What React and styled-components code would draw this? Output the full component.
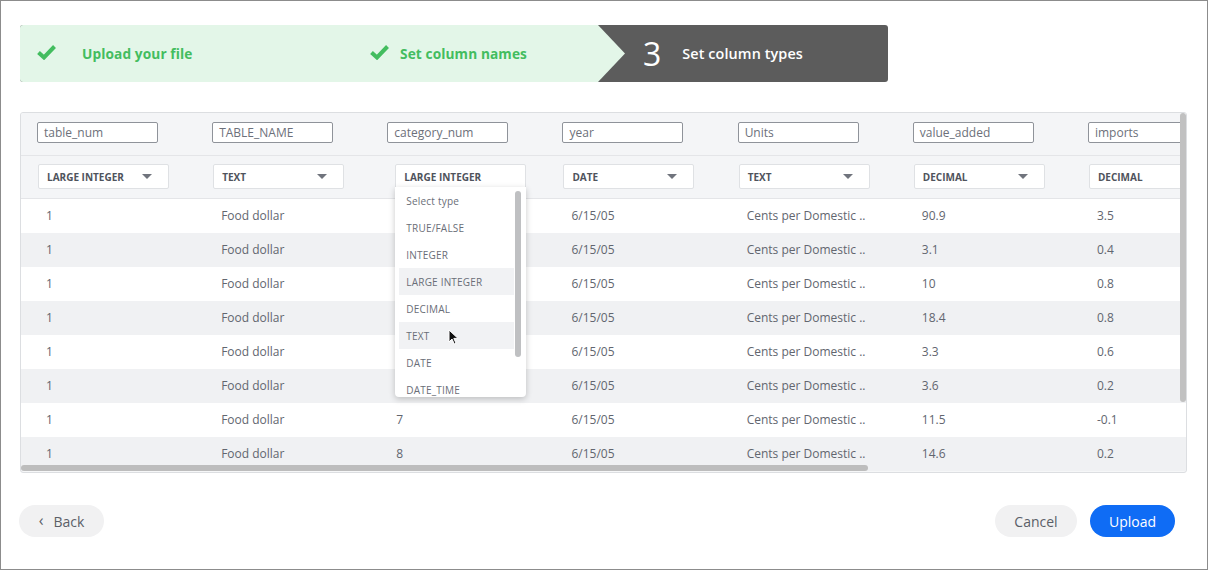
import React from 'react';
import styled, { createGlobalStyle } from 'styled-components';

const GlobalStyle = createGlobalStyle`
  html, body {
    margin: 0;
    padding: 0;
    background: #fff;
  }
  * {
    box-sizing: border-box;
  }
`;

const COL_W = 175.17;

const columns = [
  { name: 'table_num', type: 'LARGE INTEGER' },
  { name: 'TABLE_NAME', type: 'TEXT' },
  { name: 'category_num', type: 'LARGE INTEGER', open: true },
  { name: 'year', type: 'DATE' },
  { name: 'Units', type: 'TEXT' },
  { name: 'value_added', type: 'DECIMAL' },
  { name: 'imports', type: 'DECIMAL' },
];

const values = [
  ['90.9', '3.5'],
  ['3.1', '0.4'],
  ['10', '0.8'],
  ['18.4', '0.8'],
  ['3.3', '0.6'],
  ['3.6', '0.2'],
  ['11.5', '-0.1'],
  ['14.6', '0.2'],
];

const rows = values.map((v, i) => [
  '1',
  'Food dollar',
  String(i + 1),
  '6/15/05',
  'Cents per Domestic ..',
  v[0],
  v[1],
]);

const typeOptions = [
  'Select type',
  'TRUE/FALSE',
  'INTEGER',
  'LARGE INTEGER',
  'DECIMAL',
  'TEXT',
  'DATE',
  'DATE_TIME',
];

const Check = () => (
  <svg width="21" height="16" viewBox="0 0 21 16">
    <path d="M2.5 8.5 L8 13.5 L18.5 2.5" fill="none" stroke="#43bd5f" strokeWidth="4" strokeLinejoin="miter" />
  </svg>
);

const Caret = () => (
  <svg width="10" height="5" viewBox="0 0 10 5">
    <path d="M0 0 L10 0 L5 5 Z" fill="#70747d" />
  </svg>
);

const Cursor = () => (
  <svg width="11" height="16" viewBox="0 0 11 16">
    <path d="M1 1 L1 13 L4 10 L6.3 15 L8 14.2 L5.8 9.4 L10 9.4 Z" fill="#111" stroke="#fff" strokeWidth="1" />
  </svg>
);

const App = () => {
  return (
    <>
      <GlobalStyle />
      <Frame>
        <Stepper>
          <DoneSteps>
            <Step width={333} gap={25}>
              <Check />
              <StepText>Upload your file</StepText>
            </Step>
            <Step gap={10}>
              <Check />
              <StepText>Set column names</StepText>
            </Step>
          </DoneSteps>
          <ActiveStep>
            <StepNumber>3</StepNumber>
            <StepText active>Set column types</StepText>
          </ActiveStep>
        </Stepper>

        <TablePanel>
          <TableGrid>
            <HeaderRow>
              {columns.map((c) => (
                <HeadCell key={c.name}>
                  <NameInput>{c.name}</NameInput>
                </HeadCell>
              ))}
            </HeaderRow>
            <HeaderRow>
              {columns.map((c) => (
                <HeadCell key={c.name}>
                  <TypeSelect open={c.open}>
                    <span>{c.type}</span>
                    {!c.open && <Caret />}
                    {c.open && (
                      <Dropdown>
                        <OptionList>
                          {typeOptions.map((o) => (
                            <Option key={o} highlight={o === 'LARGE INTEGER' || o === 'TEXT'}>
                              {o}
                              {o === 'TEXT' && (
                                <CursorWrap>
                                  <Cursor />
                                </CursorWrap>
                              )}
                            </Option>
                          ))}
                        </OptionList>
                        <DropScroll />
                      </Dropdown>
                    )}
                  </TypeSelect>
                </HeadCell>
              ))}
            </HeaderRow>
            {rows.map((r, i) => (
              <DataRow key={i} striped={i % 2 === 1}>
                {r.map((cell, j) => (
                  <DataCell key={j}>{cell}</DataCell>
                ))}
              </DataRow>
            ))}
          </TableGrid>
          <VScroll />
          <HScroll />
        </TablePanel>

        <Footer>
          <PillButton width={85}>
            <BackChevron>‹</BackChevron>
            Back
          </PillButton>
          <FooterRight>
            <PillButton width={82}>Cancel</PillButton>
            <PillButton width={85} primary>
              Upload
            </PillButton>
          </FooterRight>
        </Footer>
      </Frame>
    </>
  );
};

const Frame = styled.div`
  width: 1208px;
  height: 570px;
  border: 1px solid #8c8c8c;
  padding: 24px 20px 0 18px;
  font-family: 'Open Sans', 'Liberation Sans', sans-serif;
  display: flex;
  flex-direction: column;
  overflow: hidden;
`;

const Stepper = styled.div`
  margin-left: 1px;
  width: 868px;
  height: 57px;
  display: flex;
  background: #5c5c5c;
  border-radius: 3px;
  overflow: hidden;
`;

const DoneSteps = styled.div`
  width: 605px;
  flex-shrink: 0;
  height: 100%;
  background: #e3f6e8;
  display: flex;
  align-items: center;
  clip-path: polygon(0 0, 578px 0, 605px 28.5px, 578px 57px, 0 57px);
`;

const Step = styled.div`
  width: ${(p) => (p.width ? `${p.width}px` : 'auto')};
  padding-left: 16px;
  display: flex;
  align-items: center;
  gap: ${(p) => p.gap}px;
  svg {
    margin-top: -3px;
  }
`;

const StepText = styled.span`
  font-size: ${(p) => (p.active ? 14.4 : 13.7)}px;
  font-weight: ${(p) => (p.active ? 600 : 700)};
  color: ${(p) => (p.active ? '#fff' : '#43bd5f')};
  letter-spacing: 0.1px;
`;

const ActiveStep = styled.div`
  display: flex;
  align-items: center;
  padding-left: 18px;
  gap: 21px;
`;

const StepNumber = styled.span`
  color: #fff;
  font-size: 32px;
  font-weight: 400;
  line-height: 1;
`;

const TablePanel = styled.div`
  position: relative;
  margin-top: 30px;
  margin-left: 1px;
  width: 1167px;
  height: 361px;
  border: 1px solid #dcdee1;
  border-radius: 3px;
  overflow: hidden;
  background: #f6f7f8;
`;

const TableGrid = styled.div`
  display: grid;
  grid-template-columns: repeat(7, ${COL_W}px);
  width: max-content;
`;

const HeaderRow = styled.div`
  display: contents;
  & > div {
    height: 43px;
    border-bottom: 1px solid #e4e5e8;
    background: #f4f5f7;
  }
`;

const HeadCell = styled.div`
  display: flex;
  align-items: flex-start;
  padding: 9px 0 0 16px;
`;

const NameInput = styled.div`
  width: 121px;
  height: 21px;
  border: 1px solid #8f939a;
  border-radius: 2px;
  background: #fff;
  padding-left: 6px;
  font-size: 12px;
  line-height: 19px;
  color: #6c707a;
`;

const TypeSelect = styled.div`
  position: relative;
  width: 131px;
  height: 25px;
  margin-top: -1px;
  margin-left: ${(p) => (p.open ? 8 : 1)}px;
  border: 1px solid #dfe1e4;
  border-radius: 2px;
  background: #fff;
  display: flex;
  align-items: center;
  justify-content: space-between;
  padding: 0 16px 0 8px;
  font-size: 10px;
  font-weight: 700;
  color: #4f535c;
  z-index: ${(p) => (p.open ? 5 : 1)};
`;

const Dropdown = styled.div`
  position: absolute;
  top: 22px;
  left: -1px;
  width: 131px;
  height: 210px;
  background: #fff;
  border-radius: 0 0 4px 4px;
  box-shadow: 0 2px 6px rgba(0, 0, 0, 0.22);
  overflow: hidden;
  display: flex;
`;

const OptionList = styled.div`
  flex: 1;
  padding: 0 0 0 4px;
`;

const Option = styled.div`
  position: relative;
  height: 27px;
  padding-left: 7px;
  display: flex;
  align-items: center;
  font-size: 10px;
  font-weight: 400;
  color: #6a6e78;
  letter-spacing: 0.2px;
  background: ${(p) => (p.highlight ? '#f1f2f4' : 'transparent')};
`;

const CursorWrap = styled.span`
  position: absolute;
  left: 49px;
  top: 7px;
  display: flex;
`;

const DropScroll = styled.div`
  width: 6px;
  height: 166px;
  margin: 4px 5px 0 1px;
  border-radius: 3px;
  background: #bfc0c2;
`;

const DataRow = styled.div`
  display: contents;
  & > div {
    background: ${(p) => (p.striped ? '#f0f1f3' : '#fff')};
  }
`;

const DataCell = styled.div`
  height: 34px;
  padding: 0 0 2px 25px;
  display: flex;
  align-items: center;
  font-size: 12px;
  color: #62666f;
  white-space: nowrap;
`;

const VScroll = styled.div`
  position: absolute;
  top: 0;
  right: 0;
  width: 6px;
  height: 289px;
  border-radius: 3px;
  background: #c1c1c1;
  z-index: 6;
`;

const HScroll = styled.div`
  position: absolute;
  left: 0;
  bottom: 1px;
  width: 847px;
  height: 6px;
  border-radius: 3px;
  background: #bdbdbd;
  z-index: 6;
`;

const Footer = styled.div`
  margin-top: 32px;
  width: 1156px;
  display: flex;
  justify-content: space-between;
  align-items: center;
`;

const FooterRight = styled.div`
  display: flex;
  gap: 13px;
`;

const PillButton = styled.div`
  width: ${(p) => p.width}px;
  height: 32px;
  border-radius: 16px;
  display: flex;
  align-items: center;
  justify-content: center;
  gap: 10px;
  font-size: 14px;
  background: ${(p) => (p.primary ? '#0f6cf5' : '#f1f1f2')};
  color: ${(p) => (p.primary ? '#fff' : '#5b5f68')};
`;

const BackChevron = styled.span`
  font-size: 16px;
  line-height: 1;
  margin-top: -3px;
`;

export default App;
